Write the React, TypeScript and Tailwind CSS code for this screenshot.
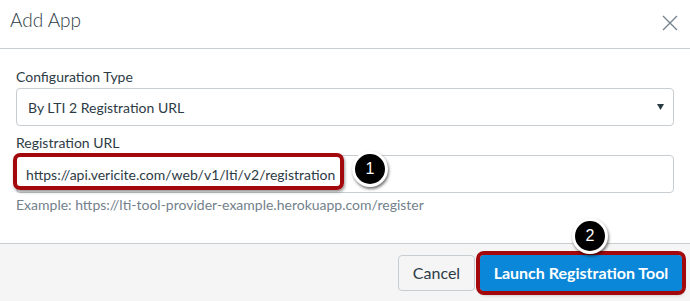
import React from "react";

function Callout({ n, className }: { n: string; className: string }) {
  return (
    <div
      className={`absolute flex h-[36px] w-[36px] items-center justify-center rounded-full border-[3px] border-white bg-black text-[16px] text-white shadow-[1px_2px_3px_rgba(0,0,0,0.55)] ${className}`}
      style={{ fontFamily: '"Liberation Sans", Arial, sans-serif' }}
    >
      {n}
    </div>
  );
}

export default function App() {
  return (
    <div
      className="relative h-[301px] w-[690px] overflow-hidden bg-white text-[#2d3b45]"
      style={{ fontFamily: 'Lato, "Open Sans", sans-serif' }}
    >
      {/* Header */}
      <div className="flex h-[49px] items-center justify-between border-b border-[#c7cdd1] pl-[10px] pr-[12px]">
        <h1 className="pb-[7px] text-[19px] font-light text-[#2d3b45]">Add App</h1>
        <svg width="16" height="16" viewBox="0 0 16 16" className="mb-[2px]">
          <path d="M1 1 L15 15 M15 1 L1 15" stroke="#73818c" strokeWidth="1.3" />
        </svg>
      </div>

      {/* Body */}
      <div className="px-[16px] pt-[18px]">
        <label className="block text-[14px] leading-[20px]">Configuration Type</label>
        <div className="mt-[1px] flex h-[38px] items-center justify-between rounded-[4px] border border-[#c7cdd1] pl-[11px] pr-[9px] text-[14px]">
          <span>By LTI 2 Registration URL</span>
          <svg width="7" height="6" viewBox="0 0 7 6">
            <path d="M0 0 H7 L3.5 6 Z" fill="#2d3b45" />
          </svg>
        </div>

        <label className="mt-[7px] block text-[14px] leading-[20px]">Registration URL</label>
        <div className="relative mt-[2px] flex h-[38px] items-center rounded-[4px] border border-[#c7cdd1] pl-[9px] text-[14px]">
          https://api.vericite.com/web/v1/lti/v2/registration
          <div className="pointer-events-none absolute -left-[4px] -top-[3px] h-[37px] w-[331px] rounded-[7px] border-[4px] border-[#a3080c] shadow-[1px_2px_3px_rgba(0,0,0,0.4)]" />
        </div>
        <p className="mt-[3px] text-[14px] leading-[18px] text-[#73818c]">
          Example: https://lti-tool-provider-example.herokuapp.com/register
        </p>
      </div>

      {/* Footer */}
      <div className="absolute bottom-0 left-0 right-0 flex h-[58px] items-center justify-end gap-[5px] border-t border-[#c7cdd1] bg-[#f5f5f5] pr-[8px]">
        <button className="h-[36px] w-[77px] rounded-[4px] border border-[#c7cdd1] bg-[#f5f5f5] text-[16px] text-[#2d3b45]">
          Cancel
        </button>
        <button className="h-[36px] w-[202px] rounded-[4px] bg-[#0a87d8] text-[16px] font-bold text-white shadow-[1px_3px_4px_rgba(0,0,0,0.4)] outline-[4px] outline-solid outline-[#a3080c]">
          Launch Registration Tool
        </button>
      </div>

      {/* Callouts */}
      <Callout n="1" className="left-[352px] top-[151px]" />
      <Callout n="2" className="left-[572px] top-[218px]" />
    </div>
  );
}
